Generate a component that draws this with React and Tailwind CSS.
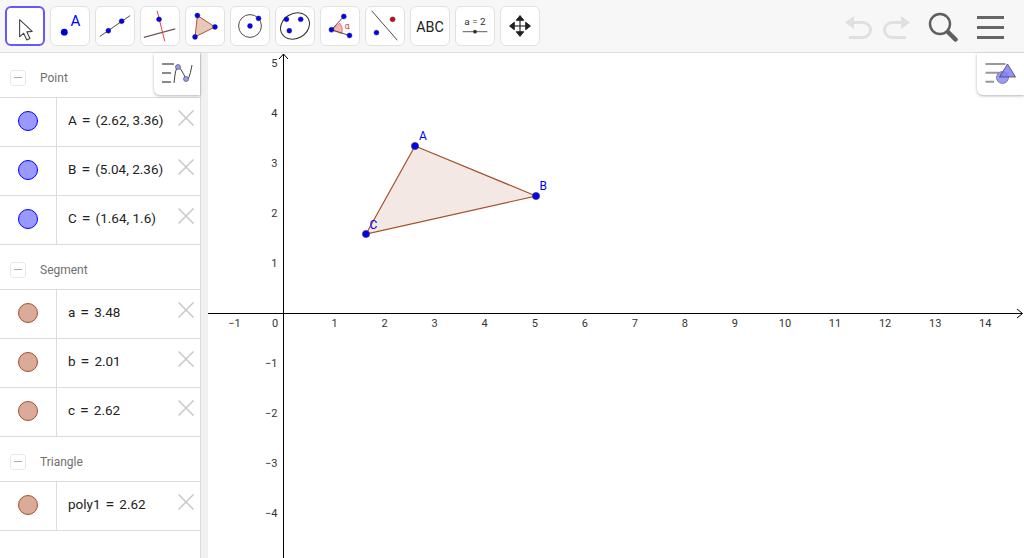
import React from 'react';

const Dot = ({ x, y, r = 2.6, fill = '#0000ff' }) => (
  <circle cx={x} cy={y} r={r} fill={fill} stroke="#1a1a4a" strokeWidth="0.5" />
);

const tools = [
  <g key="move">
    <path d="M14 13 L14 32 L18.5 28 L22 35.5 L25.5 34 L22 26.5 L28 26 Z" fill="#fff" stroke="#444" strokeWidth="1.2" strokeLinejoin="round" />
  </g>,
  <g key="point">
    <circle cx="14" cy="26.5" r="3.6" fill="#0000dd" />
    <text x="20.5" y="20" fontSize="16" fill="#0000ff" fontFamily="Roboto, sans-serif">A</text>
  </g>,
  <g key="line">
    <line x1="4" y1="31" x2="36" y2="9" stroke="#444" strokeWidth="1" />
    <Dot x={13} y={25} />
    <Dot x={27} y={15} />
  </g>,
  <g key="perp">
    <line x1="3" y1="32" x2="36" y2="23" stroke="#6b5a55" strokeWidth="1.2" />
    <line x1="17" y1="4" x2="25" y2="36" stroke="#f03040" strokeWidth="1" />
    <Dot x={19} y={13} />
  </g>,
  <g key="poly">
    <path d="M12 9 L30.5 21 L9.5 31.5 Z" fill="#e8c8b8" stroke="#a5502a" strokeWidth="1" />
    <Dot x={12} y={9} />
    <Dot x={30.5} y={21} />
    <Dot x={9.5} y={31.5} />
  </g>,
  <g key="circle">
    <circle cx="20" cy="20" r="12" fill="none" stroke="#444" strokeWidth="1" />
    <Dot x={20} y={20} />
    <Dot x={29} y={12} />
  </g>,
  <g key="conic">
    <ellipse cx="20" cy="20" rx="13" ry="16" transform="rotate(58 20 20)" fill="none" stroke="#333" strokeWidth="1.1" />
    <Dot x={11} y={13} />
    <Dot x={26} y={13} />
    <Dot x={14} y={25} />
  </g>,
  <g key="angle">
    <path d="M11 24 L20 17 A12 12 0 0 1 22 28 Z" fill="#f5b5b5" stroke="#e05050" strokeWidth="0.7" />
    <line x1="11" y1="24" x2="24" y2="10" stroke="#444" strokeWidth="1" />
    <line x1="11" y1="24" x2="30" y2="30" stroke="#444" strokeWidth="1" />
    <Dot x={11} y={24} />
    <Dot x={24} y={10} />
    <Dot x={30} y={30} />
    <text x="25" y="23" fontSize="9" fill="#e03030" fontFamily="Roboto, sans-serif">α</text>
  </g>,
  <g key="reflect">
    <line x1="6" y1="4" x2="33" y2="35" stroke="#444" strokeWidth="1" />
    <Dot x={28} y={13} fill="#e00000" />
    <Dot x={11} y={27} />
  </g>,
  <text key="abc" x="20" y="26" fontSize="15" fill="#222" textAnchor="middle" fontFamily="Roboto, sans-serif">ABC</text>,
  <g key="slider">
    <text x="20" y="19" fontSize="10.5" fill="#333" textAnchor="middle" fontFamily="Roboto, sans-serif">a = 2</text>
    <line x1="7" y1="26" x2="33" y2="26" stroke="#555" strokeWidth="1" />
    <circle cx="20" cy="26" r="2" fill="#333" />
  </g>,
  <g key="pan" fill="#222" stroke="#222">
    <line x1="20" y1="10" x2="20" y2="30" strokeWidth="1.2" />
    <line x1="10" y1="20" x2="30" y2="20" strokeWidth="1.2" />
    <path d="M20 9 L16 14 L24 14 Z M20 31 L16 26 L24 26 Z M9 20 L14 16 L14 24 Z M31 20 L26 16 L26 24 Z" />
  </g>,
];

const sections = [
  {
    name: 'Point',
    kind: 'point',
    rows: [['A', '(2.62, 3.36)'], ['B', '(5.04, 2.36)'], ['C', '(1.64, 1.6)']],
  },
  {
    name: 'Segment',
    kind: 'seg',
    rows: [['a', '3.48'], ['b', '2.01'], ['c', '2.62']],
  },
  {
    name: 'Triangle',
    kind: 'seg',
    rows: [['poly1', '2.62']],
  },
];

const ToolButton = ({ active, children }) => (
  <div
    className={
      active
        ? 'w-10 h-10 shrink-0 bg-white rounded-md border-2 border-[#6557ff]'
        : 'w-10 h-10 shrink-0 bg-white rounded-md border border-[#e2e2e2]'
    }
  >
    <svg viewBox="0 0 40 40" className={active ? 'w-9 h-9' : 'w-[38px] h-[38px]'}>
      {children}
    </svg>
  </div>
);

const AlgebraRow = ({ name, value, kind }) => (
  <div className="h-[49px] flex border-b border-[#dcdcdc]">
    <div className="w-[57px] shrink-0 flex items-center justify-center border-r border-[#dcdcdc] pb-[3px]">
      <div
        className={
          kind === 'point'
            ? 'w-5 h-5 rounded-full bg-[#9999ff] border border-[#0000ff]'
            : 'w-5 h-5 rounded-full bg-[#d9ab98] border border-[#a5502a]'
        }
      />
    </div>
    <div className="flex-1 flex items-center pl-[11px] pb-[3px] text-[13.5px] text-[#222] whitespace-pre">
      <span>{name}</span>
      <span className="mx-[5px] text-[16px] leading-none">=</span>
      <span>{value}</span>
    </div>
    <div className="w-[22px] shrink-0 pt-[12px]">
      <svg viewBox="0 0 16 16" className="w-4 h-4" stroke="#c8c8c8" strokeWidth="1.5">
        <path d="M0.5 0.5 L15.5 15.5 M15.5 0.5 L0.5 15.5" />
      </svg>
    </div>
  </div>
);

const xTicks = [-1, 1, 2, 3, 4, 5, 6, 7, 8, 9, 10, 11, 12, 13, 14];
const yTicks = [5, 4, 3, 2, 1, -1, -2, -3, -4];

const Graph = () => (
  <svg viewBox="0 0 816 505" className="w-full h-full block">
    <line x1="0" y1="260.5" x2="814" y2="260.5" stroke="#000" />
    <path d="M809 256 L814.5 260.5 L809 265" fill="none" stroke="#000" />
    <line x1="75.5" y1="1" x2="75.5" y2="505" stroke="#000" />
    <path d="M71 6 L75.5 1 L80 6" fill="none" stroke="#000" />
    {xTicks.map((t) => (
      <text key={t} x={76.5 + t * 50.05} y="274" fontSize="11" fill="#333" textAnchor="middle" fontFamily="Roboto, sans-serif">
        {t < 0 ? `−${-t}` : t}
      </text>
    ))}
    <text x="67" y="274" fontSize="11" fill="#333" textAnchor="middle" fontFamily="Roboto, sans-serif">0</text>
    {yTicks.map((t) => (
      <text key={t} x="69.5" y={264 - t * 50} fontSize="11" fill="#333" textAnchor="end" fontFamily="Roboto, sans-serif">
        {t < 0 ? `−${-t}` : t}
      </text>
    ))}
    <path d="M207 93 L328 143 L158 181 Z" fill="#a5502a" fillOpacity="0.13" stroke="#a5502a" strokeWidth="1.2" />
    <circle cx="207" cy="93" r="3.6" fill="#0000ff" stroke="#444" strokeWidth="0.7" />
    <circle cx="328" cy="143" r="3.6" fill="#0000ff" stroke="#444" strokeWidth="0.7" />
    <circle cx="158" cy="181" r="3.6" fill="#0000ff" stroke="#444" strokeWidth="0.7" />
    <text x="211" y="87" fontSize="12" fill="#0000ff" fontFamily="Roboto, sans-serif">A</text>
    <text x="331.5" y="137" fontSize="12" fill="#0000ff" fontFamily="Roboto, sans-serif">B</text>
    <text x="161.5" y="175.5" fontSize="12" fill="#0000ff" fontFamily="Roboto, sans-serif">C</text>
  </svg>
);

const App = () => (
  <div className="w-[1024px] h-[558px] overflow-hidden bg-white font-['Roboto',sans-serif] flex flex-col">
    <div className="h-[53px] shrink-0 bg-[#f7f7f7] border-b border-[#dedede] flex items-start pt-[6px] pl-[5px]">
      <div className="flex gap-[5px]">
        {tools.map((tool, i) => (
          <ToolButton key={i} active={i === 0}>{tool}</ToolButton>
        ))}
      </div>
      <div className="ml-auto flex items-center pr-[20px] pt-[6px]">
        <svg viewBox="0 0 70 30" className="w-[70px] h-[30px]" fill="none" stroke="#e0e0e0" strokeWidth="3">
          <path d="M3 10.5 H19 a7.5 7.5 0 0 1 0 15 H5" />
          <path d="M1 10.5 L10 4 V17 Z" fill="#e0e0e0" stroke="none" />
          <path d="M64 10.5 H48 a7.5 7.5 0 0 0 0 15 H62" />
          <path d="M66 10.5 L57 4 V17 Z" fill="#e0e0e0" stroke="none" />
        </svg>
        <svg viewBox="0 0 30 30" className="w-[30px] h-[30px] ml-[14px]" fill="none" stroke="#5f5f5f">
          <circle cx="12" cy="12" r="10" strokeWidth="2.4" />
          <path d="M20 20 L27.5 27.5" strokeWidth="4.5" strokeLinecap="round" />
        </svg>
        <div className="w-[27px] ml-[19px] flex flex-col gap-[7px]">
          <div className="h-[3px] bg-[#666]" />
          <div className="h-[3px] bg-[#666]" />
          <div className="h-[3px] bg-[#666]" />
        </div>
      </div>
    </div>

    <div className="flex-1 flex min-h-0">
      <div className="relative w-[201px] shrink-0 border-r border-[#dcdcdc]">
        {sections.map((s) => (
          <div key={s.name}>
            <div className="h-[45px] flex items-center pl-[10px] pt-[5px] border-b border-[#dcdcdc]">
              <div className="w-4 h-4 rounded-[3px] border border-[#e8e8e8] flex items-center justify-center">
                <div className="w-2 h-px bg-[#aaa]" />
              </div>
              <span className="ml-[14px] text-[12px] text-[#707070]">{s.name}</span>
            </div>
            {s.rows.map((r) => (
              <AlgebraRow key={r[0]} name={r[0]} value={r[1]} kind={s.kind} />
            ))}
          </div>
        ))}
        <div className="absolute top-0 right-0 w-[46px] h-[42px] bg-white rounded-bl-md shadow-[0_1px_3px_rgba(0,0,0,0.3)] flex items-center justify-center">
          <svg viewBox="0 0 34 24" className="w-[34px] h-[24px]" fill="none">
            <path d="M2 2 H14 M2 11 H11 M2 20 H11" stroke="#8a8a8a" strokeWidth="2" />
            <path d="M14 21 Q15.5 5 18 5 T26 17 Q29 20 32 3" stroke="#444" strokeWidth="1" />
            <circle cx="18" cy="5" r="2.5" fill="#9999ff" stroke="#444" strokeWidth="0.6" />
            <circle cx="26" cy="17" r="2.5" fill="#9999ff" stroke="#444" strokeWidth="0.6" />
          </svg>
        </div>
      </div>
      <div className="w-[7px] shrink-0 bg-[#f1f1f1]" />
      <div className="relative flex-1 min-w-0">
        <Graph />
        <div className="absolute top-0 right-0 w-[47px] h-[42px] bg-white rounded-bl-md shadow-[0_1px_3px_rgba(0,0,0,0.3)] flex items-center justify-center">
          <svg viewBox="0 0 34 24" className="w-[34px] h-[24px]">
            <path d="M1.5 2 H21.5 M1.5 10.7 H15 M1.5 19.7 H10" stroke="#999" strokeWidth="2" fill="none" />
            <circle cx="18.5" cy="15.5" r="6" fill="#9999ff" stroke="#666" strokeWidth="0.7" />
            <path d="M23.5 2 L31.5 15 H15.5 Z" fill="#8080ff" fillOpacity="0.85" stroke="#444" strokeWidth="0.8" />
          </svg>
        </div>
      </div>
    </div>
  </div>
);

export default App;
